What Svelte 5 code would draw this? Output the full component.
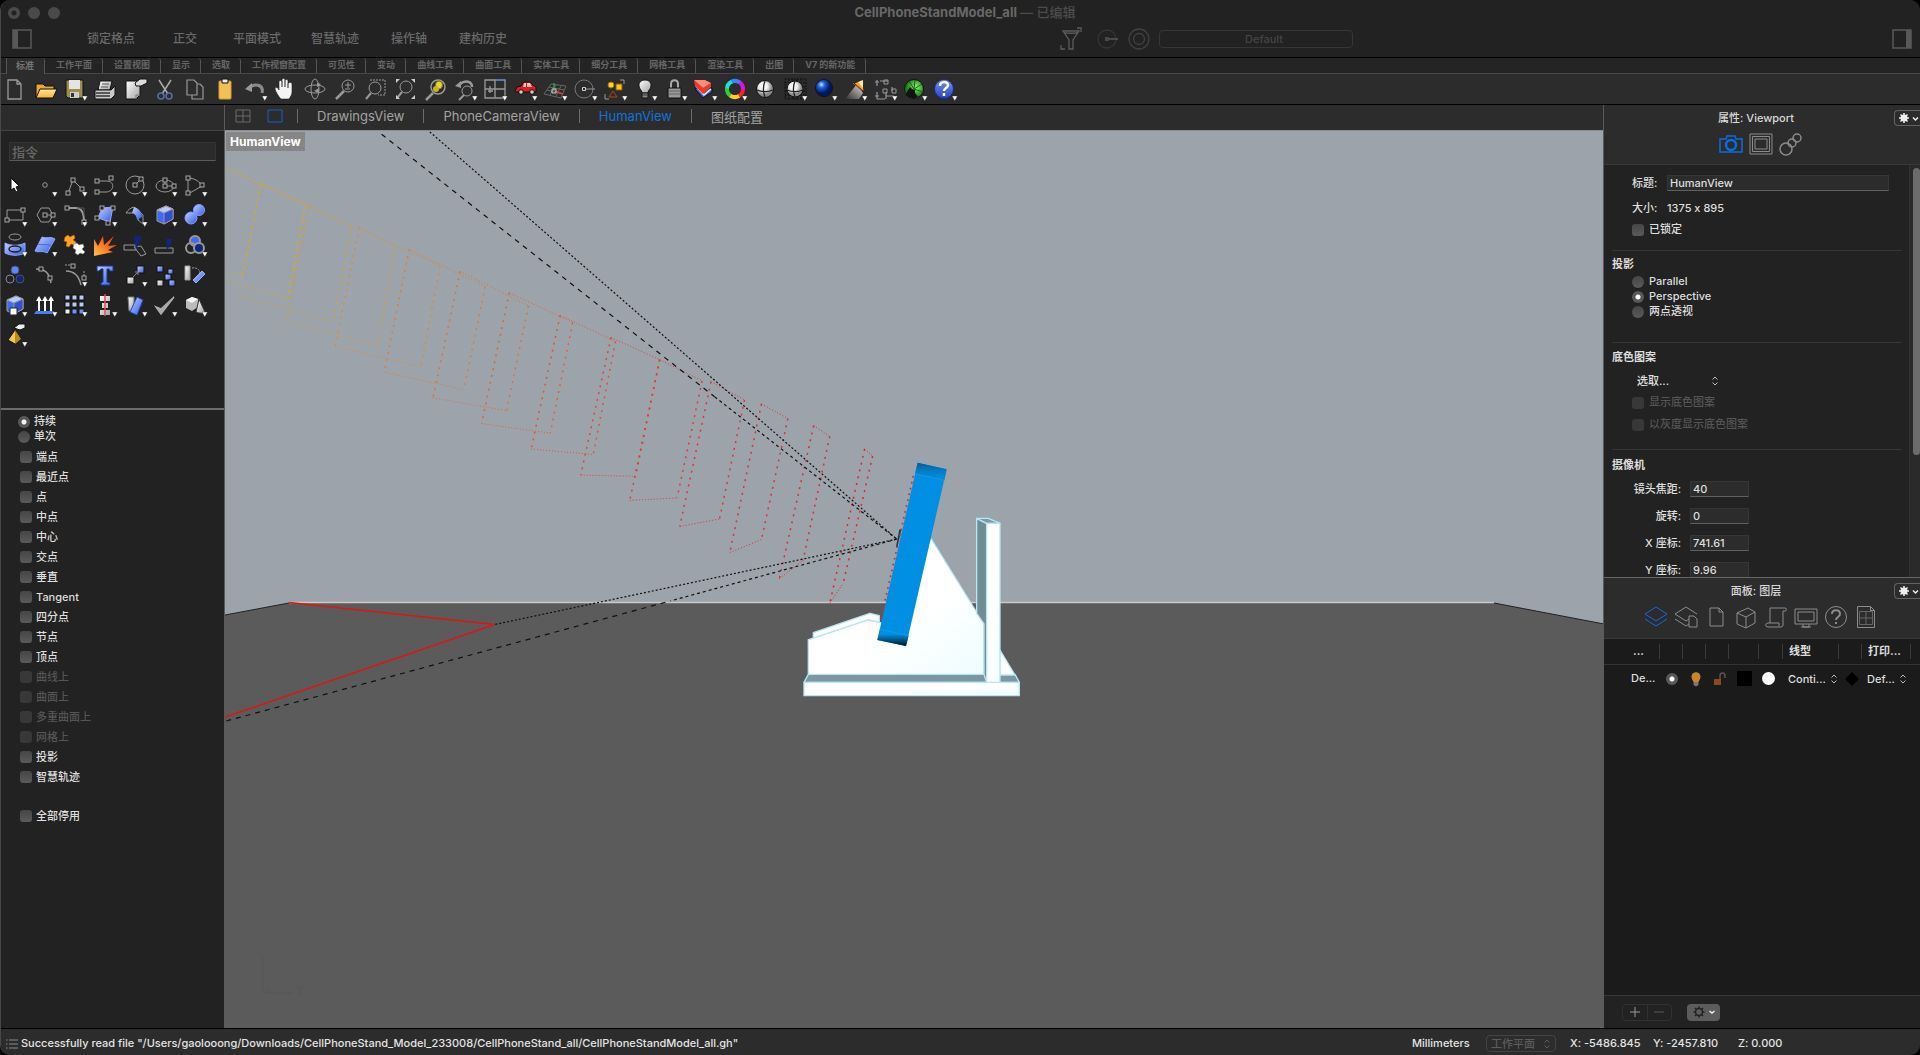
<script>
  const modes = ['锁定格点', '正交', '平面模式', '智慧轨迹', '操作轴', '建构历史'];
  const toolTabs = ['标准', '工作平面', '设置视图', '显示', '选取', '工作视窗配置', '可见性', '变动', '曲线工具', '曲面工具', '实体工具', '细分工具', '网格工具', '渲染工具', '出图', 'V7 的新功能'];
  const viewTabs = ['DrawingsView', 'PhoneCameraView', 'HumanView', '图纸配置'];
  const snaps = [
    ['端点'], ['最近点'], ['点'], ['中点'], ['中心'], ['交点'], ['垂直'], ['Tangent'], ['四分点'], ['节点'], ['顶点'],
    ['曲线上', true], ['曲面上', true], ['多重曲面上', true], ['网格上', true], ['投影'], ['智慧轨迹']
  ];
  const cameraFields = [['镜头焦距:', '40'], ['旋转:', '0'], ['X 座标:', '741.61'], ['Y 座标:', '9.96']];

  // Small square control point used on most curve icons
  const pt = (x, y) => `<rect x="${x - 2}" y="${y - 2}" width="4" height="4" fill="#222" stroke="#a8a8a8"/>`;
  const box = (x, y, s, f) => `<rect x="${x}" y="${y}" width="${s}" height="${s}" fill="${f}" stroke="#111"/>`;
  const cube = '<path d="M7 10l9-4 7 3v10l-9 5-7-3z" fill="#3f6bf2"/><path d="M7 10l9-4 7 3-9 4z" fill="#b9c9ff"/><path d="M14 13l9-4v10l-9 5z" fill="#2f50cf"/>';

  // Each entry: [name, artwork in a 30x30 cell, has fly-out arrow]
  const toolbar = [
    ['新建', '<path d="M8 6h9l4 4v15H8zM17 6v4h4" stroke-width="1.3"/>'],
    ['打开', '<path d="M6 24V10h7l2 2h9v3" fill="#e9a93a" stroke="#111"/><path d="M6 24l4-9h17l-4 9z" fill="url(#yellow)" stroke="#111"/>'],
    ['保存', '<path d="M6 6h17v18H8l-2-2z" fill="#9d8c4c" stroke="#111"/><path d="M9 6h11v9H9z" fill="#e4e4e4" stroke="none"/><path d="M10 18h9v6h-9z" fill="#ccc" stroke="none"/><path d="M11 19h3v4h-3z" fill="#333" stroke="none"/>', 1],
    ['打印', '<path d="M10 7h12l-2 9H8z" fill="url(#silver)" stroke="#111"/><path d="M5 16h16l4-4v9l-4 4H5z" fill="#c9c9c9" stroke="#111"/><path d="M6 19h14M6 22h14" stroke="#333" stroke-width="1.5"/><path d="M12 10h7M11 13h7" stroke="#555"/>'],
    ['文件属性', '<path d="M6 7h14v14l-4 4H6z" fill="url(#silver)" stroke="#111"/><path d="M15 9l5-4h7v4l-6 3h-5z" fill="#ddd" stroke="#111"/><path d="M16 25v-4h4" stroke="#777"/>'],
    ['剪切', '<path d="M9 6l9 14M21 6l-9 14" stroke="#aaa" stroke-width="1.5"/><circle cx="11" cy="22" r="3" stroke="#526fa5" stroke-width="1.5"/><circle cx="19" cy="22" r="3" stroke="#526fa5" stroke-width="1.5"/>'],
    ['复制', '<path d="M7 6h7l3 3v12H7zM12 21v4h11V13l-3-3h-3" stroke-width="1.2"/>'],
    ['粘贴', '<rect x="9" y="7" width="12" height="18" rx="1" fill="#f3bf57" stroke="#d79c35"/><path d="M12 5h6v4h-6z" fill="#eee" stroke="#111"/>'],
    ['撤销', '<path d="M22 19c2-8-6-10-12-6" stroke="#8b8b8b" stroke-width="3"/><path d="M5 15l7-6v9z" fill="#999" stroke="none"/>', 1],
    ['平移', '<path d="M11 25c-3-3-5-7-6-10 0-2 3-2 4 1V8c0-2 3-2 3 0v5V6c0-2 3-2 3 0v7-6c0-2 3-2 3 0v7-4c0-2 4-2 4 0v8c0 3-2 5-3 7z" fill="#f4f4f4" stroke="#222" stroke-width=".6"/>'],
    ['旋转视图', '<ellipse cx="15" cy="15" rx="10" ry="4"/><ellipse cx="15" cy="15" rx="4" ry="10"/><path d="M14 17l5-3v5zM17 9l4 1-4 3z" fill="#999" stroke="none"/>'],
    ['缩放', '<circle cx="18" cy="12" r="6"/><path d="M14 17l-8 8" stroke-width="2.5"/><path d="M15 11h6M18 8v6M15 15h5"/>'],
    ['窗选缩放', '<path d="M10 6h15v15H18" stroke-dasharray="2 1"/><circle cx="15" cy="14" r="6"/><path d="M11 19l-5 6" stroke-width="2"/>'],
    ['缩放范围', '<circle cx="16" cy="13" r="6"/><path d="M12 18l-5 6" stroke-width="2"/><path d="M6 5h4l-4 4zM25 5h-4l4 4zM6 25h4l-4-4zM25 25h-4l4-4z" fill="#ccc" stroke="none"/>'],
    ['缩放选取物件', '<circle cx="18" cy="13" r="7" stroke-width="1.5"/><path d="M13 19l-7 7" stroke-width="2.5"/><ellipse cx="19" cy="11" rx="3.500" ry="4" fill="#e9d530" stroke="#857400"/><ellipse cx="16" cy="15" rx="3" ry="3" fill="#c9b520" stroke="none"/>'],
    ['复原视图', '<path d="M22 13c0-6-7-7-12-3" stroke-width="2.5"/><path d="M5 12l6-5v7z" fill="#999" stroke="none"/><circle cx="17" cy="17" r="5"/><path d="M14 21l-5 5" stroke-width="2"/>', 1],
    ['工作视窗', '<path d="M5 6h20v18H5zM15 6v18M5 15h20M10 12v7M8 17h5" stroke-width="1.3"/><path d="M16 6h8" stroke="#3f6bf2"/>', 1],
    ['设置视图', '<path d="M5 17l2-4 4-1 3-4h6l4 4 2 1v5H6z" fill="#e31b1b" stroke="#111"/><path d="M14 9h2v4h-3zM17 9h3l2 4h-5z" fill="#ffc4c4" stroke="none"/><circle cx="11" cy="18" r="2.300" fill="#ccc" stroke="#111"/><circle cx="22" cy="18" r="2.300" fill="#ccc" stroke="#111"/>', 1],
    ['工作平面', '<path d="M4 20L11 10l15 2-5 12zM7 16l15 4M9 13l15 3M16 11l-6 10M21 12l-5 10" stroke="#666"/><path d="M14 17V9" stroke="#2a9b3f" stroke-width="1.500"/><path d="M15 17l8 3" stroke="#d33" stroke-width="1.500"/><path d="M12 15h4v4h-4z" stroke="#ccc"/>', 1],
    ['基准点', '<circle cx="14" cy="15" r="9" stroke="#777"/><path d="M16 15h9"/><path d="M12.500 13.500h3v3h-3z" stroke="#ccc"/>', 1],
    ['图层', '<path d="M20 6h4v4M5 20v5h4"/><circle cx="11" cy="11" r="3" fill="#ffd32a" stroke="#a56c00"/><path d="M16 10h6v6h-6z" fill="#ffc21c" stroke="#8a5a00"/><path d="M13 17l4 6H9z" stroke="#a64b12"/>', 1],
    ['隐藏', '<path d="M9 12c-1-8 13-8 12 0 0 3-3 4-3 7h-6c0-3-3-4-3-7z" fill="url(#silver)" stroke="#111"/><path d="M12 19h6v5h-6z" fill="#888" stroke="#111"/><path d="M12 21h6" stroke="#333"/>', 1],
    ['锁定', '<path d="M11 14v-4c0-5 7-5 7 0v4" stroke="#aaa" stroke-width="2"/><path d="M8 14h13v10H8z" fill="#999" stroke="#111"/><path d="M9 17h11M9 20h11" stroke="#666"/>', 1],
    ['着色', '<path d="M5 15l8 9 9-6v-4H7z" fill="#3564cc" stroke="#111"/><path d="M6 12l8 9 7-6" stroke="#eee" stroke-width="1.500"/><path d="M4 6l9 8 8-5v4l-8 7-8-8z" fill="#ef3923" stroke="none"/><path d="M4 6l11 0 6 3-8 5z" fill="#ff8b74" stroke="none"/>', 1],
    ['物件颜色', '<circle cx="15" cy="15" r="8" stroke="#f22" stroke-width="4" stroke-dasharray="9 50"/><circle cx="15" cy="15" r="8" stroke="#d1e" stroke-width="4" stroke-dasharray="9 50" transform="rotate(-60 15 15)"/><circle cx="15" cy="15" r="8" stroke="#38f" stroke-width="4" stroke-dasharray="9 50" transform="rotate(-120 15 15)"/><circle cx="15" cy="15" r="8" stroke="#2dd" stroke-width="4" stroke-dasharray="9 50" transform="rotate(180 15 15)"/><circle cx="15" cy="15" r="8" stroke="#3c3" stroke-width="4" stroke-dasharray="9 50" transform="rotate(120 15 15)"/><circle cx="15" cy="15" r="8" stroke="#fc2" stroke-width="4" stroke-dasharray="9 50" transform="rotate(60 15 15)"/>', 1],
    ['渲染', '<circle cx="15" cy="15" r="8.500" fill="url(#pearl)" stroke="#111"/><path d="M7 16c5 2 11 2 16 0M15 7c-2 5-2 11 0 16" stroke="#222" stroke-width="1.300"/>'],
    ['渲染网格', '<path d="M5 5h21v20H5zM9 5v20M13 5v20M17 5v20M21 5v20M5 9h21M5 13h21M5 17h21M5 21h21" stroke="#111" stroke-dasharray="2 1"/><circle cx="15" cy="15" r="8" fill="url(#pearl)" stroke="#111"/><path d="M7 16c5 2 11 2 16 0M15 7c-2 5-2 11 0 16" stroke="#222" stroke-width="1.300"/>', 1],
    ['材质', '<circle cx="14" cy="14" r="8.500" fill="url(#blueball)" stroke="#111"/>', 1],
    ['灯光', '<path d="M5 25l12-15 6 9-4 6z" fill="url(#beam)" stroke="none"/><path d="M14 9l9-3 1 12z" fill="#ffa52e" stroke="#222"/><path d="M18 8l5-2 0 8z" fill="#fff0a0" stroke="none"/><path d="M13 9l9 8" stroke="#c35320"/>', 1],
    ['标注', '<path d="M7 6v6M10 7h8M7 18v7M16 18v7M16 22h8M22 13v4M7 25h8" stroke-width="1.200"/><path d="M5 8h4M5 22h4M14 6h4v4h-4zM13 15h4v4h-4zM22 15h4v4h-4z"/>', 1],
    ['Grasshopper', '<circle cx="14" cy="15" r="9.500" fill="url(#greenball)" stroke="#111"/><path d="M14 15L9 7M14 15l8-5M14 15l1-9M14 15l9 3" stroke="#146514"/><path d="M6 20l2-4 2-3 2 2 3 1 0 3 3 4-4 1c-4 0-7-1-8-4z" fill="#111" stroke="none"/>', 1],
    ['帮助', '<circle cx="14" cy="15" r="9.500" fill="url(#help)" stroke="#1b2c80"/><path d="M10 12c0-5 8-5 8-1 0 3-4 3-4 6M14 19v3" stroke="#fff" stroke-width="2.500"/>', 1]
  ];

  const palette = [
    ['选取', '<path d="M11 8v12l3-2 2 4 2-1-2-4 3-1z" fill="#fff" stroke="#111"/>'],
    ['点', '<circle cx="15" cy="15" r="2.300"/>', 1],
    ['多段线', '<path d="M8 23l5-13 9 9"/>' + pt(8, 23) + pt(13, 10) + pt(22, 19), 1],
    ['曲线', '<path d="M7 11h9c10 0 8 11 0 11H8"/>' + pt(7, 11) + pt(21, 8) + pt(7, 22), 1],
    ['圆', '<circle cx="15" cy="15" r="9"/><path d="M15 15l6-6"/>' + pt(15, 15) + pt(21, 9), 1],
    ['椭圆', '<ellipse cx="15" cy="16" rx="9" ry="6"/><path d="M15 16V10M15 16h9"/>' + pt(15, 10) + pt(15, 16) + pt(24, 16), 1],
    ['圆弧', '<path d="M8 8c7 0 12 4 14 8l-14 8z"/>' + pt(8, 8) + pt(22, 15) + pt(8, 23), 1],
    ['矩形', '<path d="M7 10h16v10H7z"/>' + pt(7, 20) + pt(23, 10), 1],
    ['多边形', '<path d="M11 8h8l4 7-4 7h-8l-4-7zM15 15h7"/>' + pt(15, 15) + pt(23, 15), 1],
    ['圆角', '<path d="M7 8h9c6 0 8 6 8 14" stroke-width="2"/><path d="M17 8h7v7" stroke="#555"/>' + pt(7, 8) + pt(24, 22), 1],
    ['曲面', '<path d="M12 8l11-1-3 15-12-4z" fill="url(#blue)" stroke="#8fa8ff"/>' + pt(12, 8) + pt(23, 8) + pt(7, 18) + pt(18, 23), 1],
    ['曲面圆角', '<path d="M6 13c2-3 4-5 8-6l9 8v9l-5-4c0-5-3-8-6-7z"/><path d="M14 7c6 2 8 6 8 10l-5 3c0-4-3-7-5-7z" fill="url(#blue)" stroke="none"/>', 1],
    ['立方体', cube, 1],
    ['布尔运算', '<circle cx="19" cy="10" r="5.500" fill="url(#blue)" stroke="#7f9fff"/><circle cx="11" cy="18" r="6" fill="url(#blue)" stroke="#7f9fff"/>', 1],
    ['投影曲线', '<ellipse cx="15" cy="7" rx="6" ry="3"/><path d="M5 13c6 3 14 3 20 0v10c-6 3-14 3-20 0z" fill="url(#blue)" stroke="#8ea9ff"/><ellipse cx="15" cy="19" rx="6" ry="3" stroke="#222" stroke-width="1.500"/>', 1],
    ['网格', '<path d="M12 7c5 2 8-1 13 2l-8 14c-5-3-8 0-12-2z" fill="url(#blue)" stroke="#8ea9ff"/><path d="M8 14c5 2 8-1 13 2" stroke="#4767d5"/>', 1],
    ['组合', '<path d="M5 7l3-2 2 2 4-2 1 3-2 2 3 2-1 3-4-1-2 3-3-1 1-4-3-1z" fill="#ffa226" stroke="#bf6000" stroke-width=".6"/><path d="M14 14l3-1 2 2 4-1 1 3-2 2 3 3-2 2-3-1-2 2-3-2 1-3-3-2z" fill="#fff" stroke="#888" stroke-width=".6"/>'],
    ['炸开', '<path d="M4 26V9l4 7 5-10 1 9 10-9-6 10 9-1-9 5 5 2z" fill="url(#fire)" stroke="none"/>'],
    ['修剪', '<path d="M4 15h12v5H4zM14 17l7-1 5 8-5 2z"/><path d="M14 6h8l-6 14z" fill="#12247c" stroke="none"/>'],
    ['分割', '<path d="M5 18h18v5H5z"/><path d="M16 9h7l-6 12z" fill="#12247c" stroke="none"/>'],
    ['群组', '<circle cx="15" cy="11" r="5" stroke-width="2" fill="#3f6bf2"/><circle cx="11" cy="18" r="5" stroke-width="2"/><circle cx="19" cy="18" r="5" stroke-width="2" fill="#12247c"/>', 1],
    ['解散群组', '<circle cx="15" cy="10" r="4" fill="#5b86ff" stroke="#456"/><circle cx="10" cy="19" r="4" stroke="#888"/><circle cx="20" cy="19" r="4" fill="#12247c" stroke="#456"/>'],
    ['编辑点', '<path d="M6 9c10 0 13 4 15 14" stroke-width="1.500"/>' + pt(11, 9) + pt(20, 18)],
    ['控制点', '<path d="M5 5h8M24 11v8" stroke-dasharray="2 1"/><path d="M6 11c9 0 13 5 15 14" stroke-width="1.500"/>' + pt(13, 6) + pt(24, 18), 1],
    ['文字', '<path d="M7 6h16v5h-3l-1-2h-2v13l3 1v2h-9v-2l2-1V9h-2l-2 2H7z" fill="url(#blue)" stroke="#193a99"/>'],
    ['移动', box(7, 17, 7, 'url(#silver)') + box(17, 6, 7, 'url(#blue)') + '<path d="M13 17l5-5m-3 0h3v3" stroke="#888"/>', 1],
    ['复制物件', box(7, 6, 6, 'url(#blue)') + box(7, 20, 6, 'url(#silver)') + box(15, 14, 6, 'url(#blue)') + box(18, 9, 5, 'url(#blue)') + box(19, 20, 6, 'url(#blue)')],
    ['旋转', '<path d="M5 6h5v14H5z" fill="url(#silver)" stroke="#999"/><path d="M12 8c6-1 8 3 8 5" stroke-dasharray="2 1"/><path d="M13 20l9-9 3 3-9 9z" fill="url(#blue)" stroke="#98aeff"/>'],
    ['实体编辑', cube + '<path d="M10 18h7v7h-7z" fill="#fff" stroke="#222"/>', 1],
    ['挤出', '<path d="M6 21h18l-2 3H4z" fill="#4c7aff" stroke="none"/><path d="M9 21V9M15 21V9M21 21V9" stroke="#fff" stroke-width="2"/><path d="M6 11l3-5 3 5zM12 11l3-5 3 5zM18 11l3-5 3 5z" fill="#fff" stroke="none"/>', 1],
    ['阵列', [0, 1, 2].map((r) => [0, 1, 2].map((c) => box(5 + c * 7, 5 + r * 7, 5, r === 2 && c === 0 ? '#eee' : r === 2 ? '#6f92ff' : '#bcc9f4')).join('')).join(''), 1],
    ['对齐', '<path d="M10 6h10v5H10zM12 13h6v5h-6zM10 20h10v5H10z" fill="url(#silver)" stroke="none"/><path d="M15 4v22" stroke="#f14455" stroke-width="1.500"/>', 1],
    ['镜像', '<path d="M8 7h6v12l-5 2z" fill="url(#silver)" stroke="#777"/><path d="M17 7l6 3-6 15-7-3z" fill="url(#blue)" stroke="#2348be"/>', 1],
    ['检查', '<path d="M6 17l5 7L24 7 11 19z" fill="#aaa" stroke="#aaa" stroke-width="1.500"/>', 1],
    ['实体', '<path d="M6 10l6-3 6 2v8l-6 4-6-3z" fill="#bbb" stroke="none"/><path d="M6 10l6-3 6 2-6 4z" fill="#f4f4f4" stroke="none"/><path d="M19 9l6 13c-3 2-7 1-9 0z" fill="url(#silver)" stroke="#333"/>', 1],
    ['平面着色', '<path d="M14 8l5-4h6v4l-5 2z" fill="#eee" stroke="#111"/><path d="M15 10L8 20l7 4 6-5z" fill="#f4c84e" stroke="#111"/><path d="M15 10v14l6-5z" fill="#bd8722" stroke="none"/>', 1]
  ];

  // Icons of the layers panel, 24x24 artwork
  const panelIcons = [
    ['图层', '<path d="M1 9l11-7 11 7-11 7zM1 14l11 7 11-7"/>', 1],
    ['图块', '<path d="M15 14l-3 2L1 9l11-7 11 7M1 14l11 7 3-2"/><path d="M15 11h5l3 3v8h-8z"/>'],
    ['文件', '<path d="M6 3h9l4 4v14H6zM15 3v4h4"/>'],
    ['物件', '<path d="M3 8l11-5 7 4v11l-9 5-9-4zM3 8l9 4 9-5M12 12v11"/>'],
    ['记事本', '<path d="M6 3h15c2 0 2 3 0 3h-2v14c0 2-2 2-3 2H4c-3 0-3-4 0-4h11v3M6 18V3"/>'],
    ['显示', '<path d="M1 4h22v15H1zM4 7h16v9H4zM9 19v3h6v-3M7 22h10"/>'],
    ['帮助', '<circle cx="12" cy="12" r="10.500"/><path d="M8 9c0-5 8-5 8 0 0 3-4 3-4 6M12 17v2" stroke-width="2"/>'],
    ['图纸', '<path d="M3.500 1.500h13l4 4v17h-17zM16.500 1.500v4h4"/><path d="M5.500 6.500h13v13h-13zM12 6v14M5 13h14" stroke="#666"/>']
  ];

  // Corners of each projected frame: top-left, top-right, bottom-right, bottom-left
  const frames = [
    [92, 162, 295, 270, 253, 510, 40, 443, '#d7a02c'],
    [200, 218, 392, 320, 352, 570, 150, 508, '#d99a35'],
    [312, 272, 493, 370, 450, 625, 258, 572, '#dc8b33'],
    [424, 327, 594, 422, 546, 682, 368, 637, '#e07c31'],
    [538, 383, 691, 470, 642, 735, 477, 703, '#e36f30'],
    [648, 437, 790, 512, 740, 792, 586, 768, '#e5622f'],
    [762, 494, 886, 560, 836, 846, 697, 832, '#e5542f'],
    [876, 550, 985, 606, 931, 901, 808, 898, '#e4452e'],
    [985, 606, 1080, 660, 1024, 956, 918, 962, '#e33b30'],
    [1100, 662, 1175, 708, 1119, 1009, 1030, 1028, '#e23434'],
    [1213, 718, 1272, 755, 1213, 1061, 1142, 1094, '#e23030'],
    [1330, 773, 1366, 800, 1306, 1114, 1253, 1160, '#e22c2c'],
    [1444, 832, 1462, 850, 1396, 1172, 1366, 1222, '#e22626']
  ];
</script>

{#snippet icon(art, arrow)}
  <svg class="ico" viewBox="0 0 30 30" aria-hidden="true">
    {@html art}
    {#if arrow}<path d="M22 22h5.500l-2.700 5z" fill="#fff" stroke="#222" stroke-width=".4" />{/if}
  </svg>
{/snippet}

{#snippet stepper()}
  <svg class="stepper" viewBox="0 0 8 10" aria-hidden="true"><path d="M1.500 3.500L4 1l2.500 2.500M1.500 6.500L4 9l2.500-2.500" /></svg>
{/snippet}

{#snippet gear()}
  <svg class="gear" viewBox="0 0 24 14" aria-hidden="true">
    <circle cx="8" cy="7" r="3.500" />
    <path d="M8 2v10M3 7h10M4.500 3.500l7 7M11.500 3.500l-7 7" />
    <path class="chev" d="M17 6.500l2.500 2.500L22 6.500" />
  </svg>
{/snippet}

<svg class="defs" aria-hidden="true">
  <defs>
    <linearGradient id="blue" x1="0" y1="0" x2="1" y2="1"><stop offset="0" stop-color="#c3d0ff" /><stop offset="1" stop-color="#2f5bea" /></linearGradient>
    <linearGradient id="silver" x1="0" y1="0" x2="1" y2="1"><stop offset="0" stop-color="#fff" /><stop offset="1" stop-color="#a2a2a2" /></linearGradient>
    <linearGradient id="yellow" x1="0" y1="0" x2="0" y2="1"><stop offset="0" stop-color="#ffe79a" /><stop offset="1" stop-color="#f8b43a" /></linearGradient>
    <linearGradient id="fire" x1="0" y1="1" x2="1" y2="0"><stop offset="0" stop-color="#ffc64a" /><stop offset=".6" stop-color="#f4631a" /><stop offset="1" stop-color="#e8360c" /></linearGradient>
    <linearGradient id="beam" x1="1" y1="0" x2="0" y2="1"><stop offset="0" stop-color="#ddd" /><stop offset="1" stop-color="#2c2c2c" /></linearGradient>
    <radialGradient id="pearl" cx=".4" cy=".35"><stop offset="0" stop-color="#fff" /><stop offset=".5" stop-color="#eee" /><stop offset="1" stop-color="#888" /></radialGradient>
    <radialGradient id="blueball" cx=".35" cy=".3"><stop offset="0" stop-color="#bfe0ff" /><stop offset=".4" stop-color="#1c5fe0" /><stop offset="1" stop-color="#03175f" /></radialGradient>
    <radialGradient id="greenball" cx=".6" cy=".4"><stop offset="0" stop-color="#8df56a" /><stop offset="1" stop-color="#187a1c" /></radialGradient>
    <linearGradient id="help" x1="0" y1="0" x2="0" y2="1"><stop offset="0" stop-color="#6f93ee" /><stop offset="1" stop-color="#2744c4" /></linearGradient>
  </defs>
</svg>

<div class="app">
  <header class="titlebar">
    <div class="caption">
      <div class="lights"><i class="dot"></i><i></i><i></i></div>
      <h1>CellPhoneStandModel_all <span>— 已编辑</span></h1>
    </div>
    <div class="modes">
      <button class="side" aria-label="左侧栏"><svg viewBox="0 0 20 20"><path d="M1 1h18v18H1z" /><path d="M1 1h5v18H1z" class="full" /></svg></button>
      <nav>
        {#each modes as m}<button>{m}</button>{/each}
      </nav>
      <div class="filters">
        <button class="funnel" aria-label="过滤器"><svg viewBox="0 0 22 24"><path d="M3 4h16l-6 9v9h-4v-9zM3 4c0 3 16 3 16 0M17 1h4v4M1 18v4h4" /></svg></button>
        <button class="dim" aria-label="操作轴"><svg viewBox="0 0 22 24"><circle cx="10" cy="12" r="9" stroke="#363636" /><path d="M12 12h9" stroke="#606060" /><path d="M8 10h4v4H8z" class="full" /></svg></button>
        <button class="dim" aria-label="目标"><svg viewBox="0 0 22 24"><circle cx="11" cy="12" r="10" /><circle cx="11" cy="12" r="5.500" /></svg></button>
        <select class="preset" aria-label="预设"><option>Default</option></select>
      </div>
      <button class="side" aria-label="右侧栏"><svg viewBox="0 0 20 20"><path d="M1 1h18v18H1z" /><path d="M14 1h5v18h-5z" class="full" /></svg></button>
    </div>
  </header>

  <nav class="tooltabs">
    {#each toolTabs as t, i}<button class:on={i === 0}>{t}</button>{/each}
  </nav>

  <div class="toolbar">
    {#each toolbar as [name, art, arrow]}<button aria-label={name}>{@render icon(art, arrow)}</button>{/each}
  </div>

  <main>
    <aside class="left">
      <div class="strip"></div>
      <div class="tools">
        <input class="command" type="text" placeholder="指令" aria-label="指令" />
        <div class="palette">
          {#each palette as [name, art, arrow]}<button aria-label={name}>{@render icon(art, arrow)}</button>{/each}
        </div>
      </div>
      <div class="snaps">
        <label class="radio"><input type="radio" name="snapmode" checked />持续</label>
        <label class="radio"><input type="radio" name="snapmode" />单次</label>
        <div class="checks">
          {#each snaps as [name, off]}
            <label class:off><input type="checkbox" disabled={off} />{name}</label>
          {/each}
        </div>
        <div class="checks all"><label><input type="checkbox" />全部停用</label></div>
      </div>
    </aside>

    <section class="center">
      <nav class="viewtabs">
        <button class="vicon" aria-label="四视图"><svg viewBox="0 0 16 14"><path d="M1 1h14v12H1zM8 1v12M1 7h14" /></svg></button>
        <button class="vicon blue" aria-label="单一视图"><svg viewBox="0 0 16 14"><path d="M1 1h14v12H1z" /></svg></button>
        {#each viewTabs as v}<button class="vtab" class:on={v === 'HumanView'}>{v}</button>{/each}
      </nav>
      <div class="viewport">
        <svg class="scene" viewBox="225 131 1378 897" preserveAspectRatio="xMinYMin slice" role="img" aria-label="HumanView">
          <defs>
            <linearGradient id="phTop" x1="0" y1="0" x2="0" y2="1"><stop offset="0" stop-color="#065c96" /><stop offset=".5" stop-color="#037fc9" /><stop offset="1" stop-color="#008fe2" /></linearGradient>
            <linearGradient id="phBot" x1="0" y1="0" x2="0" y2="1"><stop offset=".3" stop-color="#008fe2" /><stop offset="1" stop-color="#03131f" /></linearGradient>
            <linearGradient id="body" x1="0" y1="0" x2="1" y2="1"><stop offset=".6" stop-color="#fff" /><stop offset="1" stop-color="#eefdff" /></linearGradient>
          </defs>
          <path d="M225 131h1800v1100H225z" fill="#9ca3ab" />
          <path d="M225 615l64-12h1205l110 21h500v700H225z" fill="#5b5b5b" />
          <path d="M225 615l64-12M1494 603l110 21" stroke="#222" />
          <path d="M289 602.500h1205" stroke="#c9cac6" stroke-width="1.500" />
          <path d="M263 958v35h30M270 988l-6 5M297 986l3 4 3-4M300 990v5" stroke="#565656" fill="none" />
          <g class="wire" transform="translate(220 120) scale(.4464 .3954)">
            <path d="M12 122L92 162L200 218" stroke="#dba721" stroke-dasharray="3 2" />
            <path d="M92 162L50 397M190 220L152 452" stroke="#dba721" stroke-width="1.500" stroke-dasharray="3 4" />
            <path d="M50 397L12 381M152 452L12 405" stroke="#dba721" stroke-dasharray="1 2" />
            {#each frames as [ax, ay, bx, by, cx, cy, dx, dy, color], i}
              <path d="M{ax} {ay}L{bx} {by}M{dx} {dy}L{cx} {cy}" stroke={color} stroke-dasharray="1 2" />
              <path d={i === 0 ? `M${bx} ${by}L${cx} ${cy}` : `M${bx} ${by}L${cx} ${cy}M${ax} ${ay}L${dx} ${dy}`} stroke={color} stroke-width="1.500" stroke-dasharray="2 5" />
            {/each}
            <path d="M155 1220L615 1276L12 1510" stroke="#e01414" stroke-width="1.500" />
            <path d="M362 36L1108 700M14 1520L1010 1216" stroke="#111" stroke-width="1.200" stroke-dasharray="5 5" />
            <path d="M1516 1060L1108 700M1516 1060L1010 1216" stroke="#111" stroke-width="1.200" stroke-dasharray="3 3" />
            <path d="M470 30L1516 1060L615 1276" stroke="#111" stroke-width="1.200" stroke-dasharray="2 2" />
          </g>
          <g class="model" transform="translate(770 430) scale(.3333)">
            <path d="M115 733H735L748 757H102z" fill="#7c97a2" />
            <path d="M102 757H748V797H102z" fill="url(#body)" />
            <path d="M115 630L130 625V608L300 550L328 557V578L295 570z" fill="#fff" />
            <path d="M115 630L295 570L340 580L484 327L642 582V733H115z" fill="url(#body)" />
            <path d="M690 660L735 735H690z" fill="url(#body)" />
            <path d="M620 265L650 280V757L642 733V582L620 550z" fill="#708c97" />
            <path d="M620 265H655L690 280H650z" fill="#7f9aa5" />
            <path d="M650 280H690V757H650z" fill="url(#body)" />
            <path d="M388 298L394 300L382 353L378 350z" fill="#0b4058" stroke="none" />
            <path d="M443 98L530 118L408 648L322 630z" fill="#008fe2" stroke="none" />
            <path d="M443 98L530 118L523 151L435 131z" fill="url(#phTop)" stroke="none" />
            <path d="M330 598L416 617L408 648L322 630z" fill="url(#phBot)" stroke="none" />
            <path d="M435 131L523 151M330 598L416 617" stroke="#19a0f0" stroke-width="2" />
            <path d="M430 138L332 570" stroke="#e02424" stroke-width="5" stroke-dasharray="5 13" />
          </g>
        </svg>
        <span class="viewname">HumanView</span>
      </div>
    </section>

    <aside class="right">
      <section class="panel props">
        <header>
          <div class="ptitle"><h2>属性: Viewport</h2><button class="menu" aria-label="面板选项">{@render gear()}</button></div>
          <div class="picons">
            <button class="on" aria-label="摄像机"><svg viewBox="0 0 24 24"><path d="M1 7h6l1-3h8l1 3h6v13H1z" stroke-width="1.500" /><circle cx="12" cy="13" r="5" stroke-width="2.500" /></svg></button>
            <button aria-label="画框"><svg viewBox="0 0 24 24"><path d="M1 2h22v20H1zM3.500 4.500h17v15h-17zM6 7h12v10H6z" /></svg></button>
            <button aria-label="链接"><svg viewBox="0 0 24 24"><circle cx="7" cy="17" r="6" stroke-width="1.500" /><circle cx="13" cy="11" r="4" stroke-width="1.500" /><circle cx="18" cy="6" r="4" stroke-width="1.500" /></svg></button>
          </div>
        </header>
        <div class="scroll">
          <div class="fields">
            <div class="group first">
              <div class="line"><label for="vtitle">标题:</label><input id="vtitle" type="text" value="HumanView" /></div>
              <div class="line"><span class="lab">大小:</span><span>1375 x 895</span></div>
              <label class="tick"><input type="checkbox" />已锁定</label>
            </div>
            <div class="group projection">
              <h3>投影</h3>
              <label class="radio"><input type="radio" name="proj" />Parallel</label>
              <label class="radio"><input type="radio" name="proj" checked />Perspective</label>
              <label class="radio"><input type="radio" name="proj" />两点透视</label>
            </div>
            <div class="group wallpaper">
              <h3>底色图案</h3>
              <span class="pick choose"><select aria-label="底色图案"><option>选取...</option></select>{@render stepper()}</span>
              <label class="tick off"><input type="checkbox" disabled />显示底色图案</label>
              <label class="tick off"><input type="checkbox" disabled />以灰度显示底色图案</label>
            </div>
            <div class="group camera">
              <h3>摄像机</h3>
              {#each cameraFields as [name, value], i}
                <div class="row"><label for="cam{i}">{name}</label><input id="cam{i}" type="text" {value} /></div>
              {/each}
            </div>
          </div>
          <div class="track"><div class="thumb"></div></div>
        </div>
      </section>

      <section class="panel layers">
        <header>
          <div class="ptitle"><h2>面板: 图层</h2><button class="menu" aria-label="面板选项">{@render gear()}</button></div>
          <div class="picons">
            {#each panelIcons as [name, art, on]}<button class:on aria-label={name}><svg viewBox="0 0 24 24">{@html art}</svg></button>{/each}
          </div>
        </header>
        <div class="tablebox">
          <table>
            <colgroup><col class="w56" /><col class="w23" /><col class="w23" /><col class="w23" /><col class="w30" /><col class="w24" /><col class="w56" /><col class="w23" /><col class="w49" /><col /></colgroup>
            <thead>
              <tr><th class="name">...</th><th></th><th></th><th></th><th></th><th></th><th>线型</th><th></th><th>打印...</th><th></th></tr>
            </thead>
            <tbody>
              <tr>
                <td class="name">De...</td>
                <td><input type="radio" name="current" checked aria-label="目前的图层" /></td>
                <td><svg class="cell" viewBox="0 0 14 16"><path d="M4.500 11C-4-2 18-2 9.500 11z" fill="#c9852c" /><path d="M4.500 11h5v3l-2.500 1.500-2.500-1.500z" fill="#777" /></svg></td>
                <td><svg class="cell" viewBox="0 0 14 16"><path d="M2 8h7v6H2z" fill="#8a4a1e" /><path d="M8 8V5c0-4 5-4 5 0v2" fill="none" stroke="#555" stroke-width="1.500" /></svg></td>
                <td><i class="swatch"></i></td>
                <td><i class="ball"></i></td>
                <td class="sel"><span class="pick"><select aria-label="线型"><option>Conti...</option></select>{@render stepper()}</span></td>
                <td><svg class="cell" viewBox="0 0 16 16"><path d="M8 0l8 8-8 8-8-8z" fill="#000" /></svg></td>
                <td class="sel"><span class="pick"><select aria-label="打印线宽"><option>Def...</option></select>{@render stepper()}</span></td>
                <td></td>
              </tr>
            </tbody>
          </table>
        </div>
        <footer>
          <div class="pm">
            <button aria-label="新增图层"><svg viewBox="0 0 12 12"><path d="M6 1v10M1 6h10" /></svg></button>
            <button aria-label="删除图层"><svg viewBox="0 0 12 12"><path d="M1 6h10" /></svg></button>
          </div>
          <button class="gearbtn" aria-label="图层选项">
            <svg viewBox="0 0 32 16"><circle cx="11" cy="8" r="3.500" /><path d="M11 2.500v2M11 11.500v2M5.500 8h2M14.500 8h2M7 4l1.500 1.500M15 4l-1.500 1.500M7 12l1.500-1.500M15 12l-1.500-1.500" /><path class="chev" d="M21.500 7l2.500 2 2.500-2" /></svg>
          </button>
        </footer>
      </section>
    </aside>
  </main>

  <footer class="status">
    <svg class="list" viewBox="0 0 12 10" aria-hidden="true"><path d="M0 1h1.500M3 1h9M0 5h1.500M3 5h9M0 9h1.500M3 9h9" /></svg>
    <span class="msg">Successfully read file "/Users/gaolooong/Downloads/CellPhoneStand_Model_233008/CellPhoneStand_all/CellPhoneStandModel_all.gh"</span>
    <span class="units">Millimeters</span>
    <span class="pick plane"><select disabled aria-label="工作平面"><option>工作平面</option></select>{@render stepper()}</span>
    <span class="x">X: -5486.845</span>
    <span class="y">Y: -2457.810</span>
    <span class="z">Z: 0.000</span>
  </footer>
</div>

<style>
  :global(body) { background: #000; }
  .app, .app button, .app input, .app select {
    font-family: Inter, "Noto Sans CJK SC", sans-serif;
    font-size: 11px;
    font-weight: 500;
    font-feature-settings: "calt" 0;
  }
  .app {
    box-sizing: border-box;
    height: 100vh;
    display: flex;
    flex-direction: column;
    overflow: hidden;
    border-left: 1px solid #484848;
    border-radius: 10px;
    background: #222;
    color: #dedede;
    line-height: 15px;
  }
  .app :global(*) { box-sizing: border-box; }
  button { border: 0; padding: 0; margin: 0; background: none; color: inherit; display: flex; align-items: center; justify-content: center; }
  h1, h2, h3 { margin: 0; font-size: 11px; }
  svg { display: block; fill: none; stroke: #999; }
  .defs { position: absolute; width: 0; height: 0; }
  .ico { width: 30px; height: 30px; }

  /* title bar */
  .titlebar { flex: none; height: 58px; border-bottom: 1px solid #000; color: #686868; background: #222; }
  .caption { height: 26px; display: grid; grid-template-columns: 1fr auto 1fr; align-items: center; }
  .lights { display: flex; gap: 8px; padding-left: 7px; }
  .lights i { width: 12px; height: 12px; border-radius: 50%; background: #4a4a4a; }
  .lights .dot { background: radial-gradient(#222 2px, #4a4a4a 3px); }
  h1 { font-size: 13px; font-weight: 700; padding: 0 0 2px 9px; }
  h1 span { font-weight: 500; color: #4c4c4c; }
  .modes { display: flex; align-items: center; height: 25px; padding: 0 8px 0 11px; }
  .side svg { width: 20px; height: 20px; stroke: #585858; stroke-width: 1.5; }
  .full { fill: currentColor; stroke: none; }
  .side { color: #585858; }
  .modes nav { display: grid; grid-template-columns: 76px 72px 72px 84px 64px 84px; margin-left: 41px; }
  .app .modes nav button { font-size: 12px; height: 20px; padding-bottom: 2px; color: #696969; }
  .filters { display: flex; align-items: center; gap: 9px; margin-left: auto; margin-right: 539px; }
  .filters button { width: 22px; height: 24px; color: #606060; }
  .filters .funnel { margin-right: 6px; }
  .filters svg { width: 22px; height: 24px; stroke: #5c5c5c; stroke-width: 1.3; }
  .filters .dim { color: #484848; }
  .filters .dim svg { stroke: #414141; }
  .filters .preset { width: 194px; height: 18px; appearance: none; border: 1px solid #363636; border-radius: 4px; background: #222; color: #454545; text-align: center; text-align-last: center; padding: 0 0 0 16px; }

  /* tool tabs */
  .tooltabs { flex: none; height: 16px; display: flex; padding-left: 5px; border-bottom: 1px solid #484848; background: #242424; }
  .app .tooltabs button { padding: 0 10px 2px; height: 15px; font-size: 9px; font-weight: 700; color: #666; border-right: 1px solid #555; border-radius: 0 3px 0 0; margin-right: 1px; white-space: nowrap; }
  .app .tooltabs .on { height: 16px; border-left: 1px solid #555; background: #2c2c2c; color: #747474; padding-left: 9px; }
  .toolbar { flex: none; height: 31px; display: flex; background: #2c2c2c; border-bottom: 1px solid #000; }
  .toolbar, .palette { margin-left: -1px; }

  main { flex: 1; min-height: 0; display: flex; }

  /* left column */
  .left { flex: none; width: 224px; border-right: 1px solid #5a5a5a; background: #222; display: flex; flex-direction: column; overflow: hidden; }
  .strip { flex: none; height: 26px; background: #2c2c2c; border-bottom: 1px solid #424242; }
  .tools { flex: none; height: 277px; padding: 11px 0 0; }
  .command { display: block; width: 207px; height: 19px; margin: 0 0 9px 8px; padding: 0 2px; border: 1px solid #333; border-bottom-color: #5a5a5a; background: #2b2b2b; color: #ddd; outline: 0; }
  .left .command { font-size: 13px; }
  .command::placeholder { color: #686868; }
  .palette { display: grid; grid-template-columns: repeat(7, 30px); grid-auto-rows: 30px; }
  .snaps { flex: 1; border-top: 2px solid #6c6c6c; padding-top: 4px; }
  label { white-space: nowrap; }
  .radio, .tick, .checks label { display: flex; align-items: center; height: 15px; gap: 5px; }
  .snaps .radio { padding-left: 17px; gap: 4px; }
  .checks { padding: 3px 0 0 19px; }
  .checks label { height: 20px; gap: 4px; }
  .all { padding-top: 19px; }
  .off { color: #555; }
  input[type='radio'], input[type='checkbox'] { appearance: none; flex: none; width: 12px; height: 12px; margin: 0; border-radius: 3px; background: linear-gradient(#464646, #5a5a5a); }
  input[type='radio'] { border-radius: 50%; }
  input[type='radio']:checked { background: radial-gradient(#fff 2px, #585858 3px); }
  input:disabled { background: #383838; }

  /* viewport */
  .center { flex: 1; min-width: 0; display: flex; flex-direction: column; }
  .viewtabs { flex: none; height: 26px; display: flex; align-items: center; background: #2c2c2c; border-bottom: 1px solid #8d8d8d; padding: 0 0 3px 10px; }
  .vicon { width: 16px; margin-right: 16px; }
  .vicon svg { width: 16px; height: 14px; stroke: #6a6a6a; }
  .blue svg { stroke: #1462bd; }
  .vtab { position: relative; height: 14px; padding: 0 19px; border-left: 1px solid #6c6c6c; color: #a3a3a3; }
  .app .vtab { font-size: 13px; font-weight: 400; }
  .vicon.blue { margin-right: 14px; }
  .viewtabs .on { color: #0f72dc; }
  .viewport { flex: 1; min-height: 0; position: relative; overflow: hidden; background: #5b5b5b; }
  .scene { width: 100%; height: 100%; stroke: none; }
  .wire path { vector-effect: non-scaling-stroke; }
  .model path { stroke-linejoin: round; }
  .model { stroke: #b9e6f6; stroke-width: 4; }
  .viewname { position: absolute; left: 1px; top: 1px; height: 19px; padding: 0 4px; line-height: 19px; font-size: 12px; font-weight: 700; color: #fff; background: #868686; }

  /* right column */
  .right { flex: none; width: 317px; border-left: 1px solid #5a5a5a; display: grid; grid-template-rows: minmax(0, 473fr) minmax(0, 451fr); background: #222; }
  .panel { display: flex; flex-direction: column; min-height: 0; overflow: hidden; }
  .panel > header { flex: none; height: 60px; background: #2c2c2c; border-bottom: 1px solid #383838; }
  .ptitle { height: 26px; display: flex; align-items: center; }
  h2 { flex: 1; text-align: center; padding-left: 14px; font-weight: 500; color: #d8d8d8; }
  .menu { width: 26px; height: 16px; border: 1px solid #626262; border-right: 0; border-radius: 4px 0 0 4px; }
  .gear { width: 24px; height: 14px; stroke: #eee; stroke-width: 1.5; }
  .gear circle { fill: #eee; stroke: none; }
  .picons { display: flex; justify-content: center; gap: 6px; padding: 1px 3px 0 0; }
  .picons svg { width: 24px; height: 24px; stroke: #8c8c8c; }
  .picons .on svg { stroke: #0a6ce0; }
  .scroll { flex: 1; min-height: 0; display: flex; overflow: hidden; }
  .fields { flex: 1; padding: 0 7px 0 8px; }
  .track { width: 11px; border-left: 1px solid #333; padding: 3px 0 0 3px; background: #2a2a2a; }
  .thumb { height: 287px; border-radius: 4px; background: #6b6b6b; }
  .group { border-bottom: 1px solid #363636; padding-left: 20px; }
  .group h3 { margin-left: -20px; font-weight: 600; }
  .group:last-child { border: 0; }
  .first { height: 86px; padding-top: 10px; padding-right: 13px; }
  .line { display: grid; grid-template-columns: 35px 1fr; height: 16px; margin-bottom: 9px; align-items: center; }
  .line + .tick { margin-top: -3px; }
  input[type='text'] { min-width: 0; outline: 0; }
  .fields input[type='text'] { height: 16px; padding: 0 2px; border: 1px solid #363636; border-bottom-color: #606060; background: #2c2c2c; color: #dedede; }
  .projection { height: 92px; padding-top: 6px; }
  .projection h3 { margin-bottom: 2px; }
  .wallpaper { height: 107px; padding-top: 7px; }
  .wallpaper h3, .camera h3 { margin-bottom: 8px; }
  .wallpaper .tick { margin-top: 7px; }
  .pick { position: relative; display: flex; align-items: center; }
  .pick select { width: 100%; appearance: none; border: 0; padding: 0; background: transparent; color: inherit; outline: 0; opacity: 1; }
  .stepper { position: absolute; right: 0; width: 8px; height: 10px; stroke: #bbb; pointer-events: none; }
  .choose { width: 82px; height: 15px; margin-left: 5px; }
  .camera { padding-top: 8px; }
  .row { display: grid; grid-template-columns: 49px 59px; gap: 9px; height: 16px; margin-bottom: 11px; align-items: center; }
  .row label { text-align: right; }

  .layers { border-top: 1px solid #666; }
  .layers > header { height: 61px; }
  .tablebox { flex: 1; min-height: 0; background: #1b1b1b; border-bottom: 1px solid #383838; }
  table { width: 100%; table-layout: fixed; border-collapse: collapse; }
  .w56 { width: 56px; } .w23 { width: 23px; } .w30 { width: 30px; } .w24 { width: 24px; } .w49 { width: 49px; }
  th { height: 25px; padding: 0 0 0 6px; text-align: left; font-weight: 700; white-space: nowrap; background: linear-gradient(#3a3a3a, #3a3a3a) right center / 1px 15px no-repeat; }
  thead tr { border-bottom: 1px solid #333; }
  th:last-child { background: none; }
  td { height: 28px; padding: 0 0 0 6px; white-space: nowrap; }
  th.name { padding-left: 29px; }
  td.name { padding-left: 27px; }
  td.sel { padding-left: 5px; }
  td .pick { width: 50px; }
  td.sel:nth-child(9) .pick { width: 40px; }
  td input[type='radio'] { display: block; }
  .cell { width: 14px; height: 16px; stroke: none; }
  .swatch { display: block; width: 15px; height: 15px; margin-left: 2px; background: #000; }
  .ball { display: block; width: 13px; height: 13px; margin-left: -3px; border-radius: 50%; background: #fff; }
  .layers footer { flex: none; height: 32px; display: flex; align-items: center; gap: 15px; padding-left: 18px; }
  .pm { display: flex; width: 50px; height: 17px; border: 1px solid #313131; border-radius: 4px; }
  .pm button { flex: 1; }
  .pm svg { width: 12px; height: 12px; }
  .pm button + button { border-left: 1px solid #313131; }
  .pm button + button svg { stroke: #5a5a5a; }
  .gearbtn { width: 33px; height: 17px; border-radius: 4px; background: #5c5c5c; }
  .gearbtn svg { width: 32px; height: 16px; stroke: #222; stroke-width: 1.5; }
  .gearbtn .chev { stroke: #eee; }

  /* status bar */
  .status { flex: none; height: 27px; display: flex; align-items: center; border-top: 1px solid #000; background: #2c2c2c; color: #e4e4e4; padding: 3px 0 0 5px; white-space: nowrap; }
  .list { width: 12px; height: 10px; margin-right: 3px; stroke: #8a8a8a; }
  .msg { flex: 1; }
  .units { width: 74px; }
  .plane { width: 70px; height: 17px; padding: 0 4px; border: 1px solid #444; border-radius: 4px; color: #5c5c5c; margin-right: 14px; }
  .plane .stepper { right: 4px; stroke: #5c5c5c; }
  .x { width: 83px; }
  .y { width: 85px; }
  .z { width: 182px; }
</style>
